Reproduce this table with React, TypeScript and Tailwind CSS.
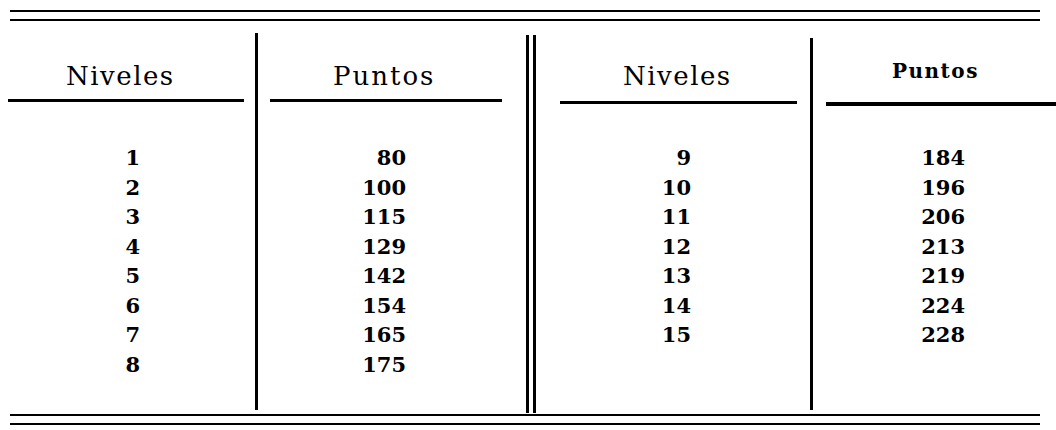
const levelsLeft = ["1", "2", "3", "4", "5", "6", "7", "8"];
const pointsLeft = ["80", "100", "115", "129", "142", "154", "165", "175"];
const levelsRight = ["9", "10", "11", "12", "13", "14", "15"];
const pointsRight = ["184", "196", "206", "213", "219", "224", "228"];

const serif = "font-['DejaVu_Serif','Liberation_Serif',serif]";

function Rule() {
  return <div className="ml-[10px] w-[1030px] h-[2px] bg-black" />;
}

function Values({ items, className }: { items: string[]; className: string }) {
  return (
    <div className={`flex flex-col text-right font-bold text-[21px] leading-[29.5px] ${className}`}>
      {items.map((v) => (
        <span key={v}>{v}</span>
      ))}
    </div>
  );
}

export default function App() {
  return (
    <div className={`w-[1056px] h-[430px] bg-white text-black overflow-hidden pt-[10px] ${serif}`}>
      <Rule />
      <div className="mt-[7px]">
        <Rule />
      </div>

      <div className="flex h-[377px] mt-[12px]">
        {/* Niveles 1-8 */}
        <div className="w-[255px] flex flex-col">
          <div className="mt-[28px] h-[30px] pl-[66px] text-[26px] leading-[30px] tracking-[1.5px]">
            Niveles
          </div>
          <div className="mt-[8px] ml-[8px] w-[236px] h-[3px] bg-black" />
          <Values items={levelsLeft} className="mt-[41px] ml-[100px] w-[40px]" />
        </div>

        <div className="w-[3px] bg-black" />

        {/* Puntos left */}
        <div className="w-[268px] flex flex-col">
          <div className="mt-[28px] h-[30px] pl-[75px] text-[26px] leading-[30px] tracking-[2px]">
            Puntos
          </div>
          <div className="mt-[8px] ml-[12px] w-[232px] h-[3px] bg-black" />
          <Values items={pointsLeft} className="mt-[41px] ml-[98px] w-[50px]" />
        </div>

        {/* double divider */}
        <div className="w-[10px] flex gap-[4px] pt-[2px]">
          <div className="w-[3px] h-[378px] bg-black" />
          <div className="w-[3px] h-[378px] bg-black" />
        </div>

        {/* Niveles 9-15 */}
        <div className="w-[274px] flex flex-col">
          <div className="mt-[28px] h-[30px] pl-[87px] text-[26px] leading-[30px] tracking-[1.5px]">
            Niveles
          </div>
          <div className="mt-[10px] ml-[24px] w-[237px] h-[3px] bg-black" />
          <Values items={levelsRight} className="mt-[39px] ml-[115px] w-[40px]" />
        </div>

        <div className="w-[3px] mt-[5px] bg-black" />

        {/* Puntos right */}
        <div className="flex-1 flex flex-col">
          <div className="mt-[24px] h-[28px] pl-[79px] font-bold text-[20px] leading-[28px] tracking-[1.5px]">
            Puntos
          </div>
          <div className="mt-[17px] ml-[13px] h-[4px] bg-black" />
          <Values items={pointsRight} className="mt-[37px] ml-[102px] w-[50px]" />
        </div>
      </div>

      <div className="mt-[4px]">
        <Rule />
      </div>
      <div className="mt-[7px]">
        <Rule />
      </div>
    </div>
  );
}
